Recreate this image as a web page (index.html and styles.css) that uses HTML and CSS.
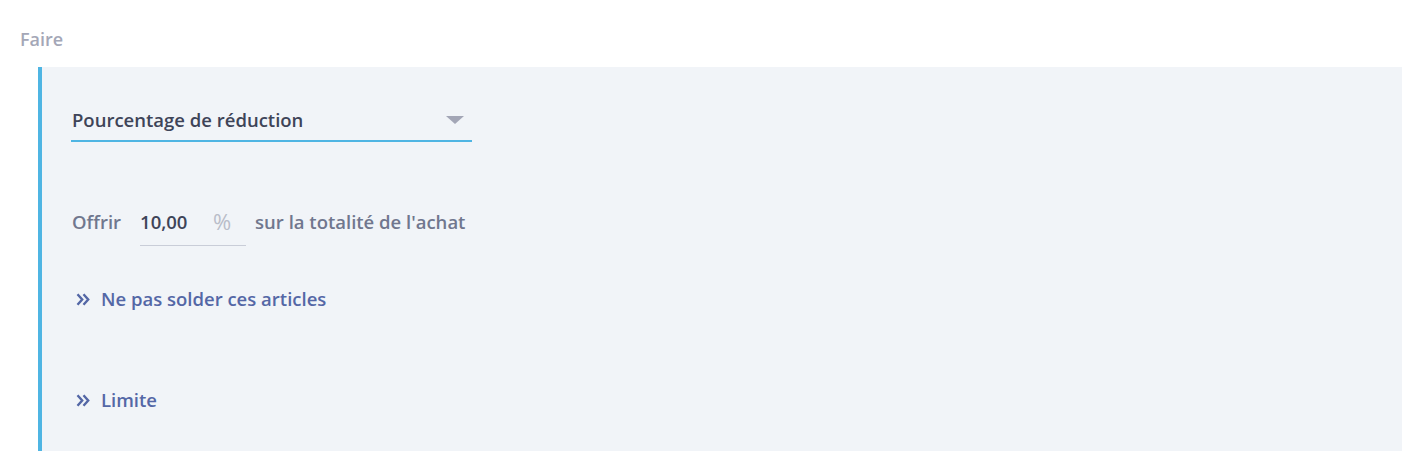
FILE: index.html
```html
<!DOCTYPE html>
<html>
<head>
    <meta charset="utf-8">
    <title>Faire</title>
    <link rel="stylesheet" href="styles.css">
</head>
<body>
    <div class="titre">Faire</div>
    <div class="bloc">
        <div class="liste">
            <span>Pourcentage de réduction</span>
            <span class="fleche"></span>
        </div>

        <div class="ligne">
            <span>Offrir</span>
            <span class="champ">
                <span class="valeur">10,00</span>
                <span class="pct">%</span>
            </span>
            <span>sur la totalité de l'achat</span>
        </div>

        <a class="lien lien1" href="#">
            <svg width="14" height="13" viewBox="0 0 14 13"><path d="M1.5 1.2 L6.2 6.5 L1.5 11.8 M7.5 1.2 L12.2 6.5 L7.5 11.8" fill="none" stroke="currentColor" stroke-width="2.4"/></svg>
            Ne pas solder ces articles
        </a>
        <a class="lien lien2" href="#">
            <svg width="14" height="13" viewBox="0 0 14 13"><path d="M1.5 1.2 L6.2 6.5 L1.5 11.8 M7.5 1.2 L12.2 6.5 L7.5 11.8" fill="none" stroke="currentColor" stroke-width="2.4"/></svg>
            Limite
        </a>
    </div>
</body>
</html>
```

FILE: styles.css
```css
body {
    margin: 0;
    font-family: "Open Sans", "Noto Sans", sans-serif;
    font-weight: 600;
    background: #fff;
}

.titre {
    padding: 27px 0 0 20px;
    margin-bottom: 16px;
    font-size: 18px;
    line-height: 24px;
    color: #a4a7b7;
}

.bloc {
    margin-left: 38px;
    width: 1364px;
    box-sizing: border-box;
    border-left: 4px solid #4fb5e3;
    background: #f1f4f8;
    padding: 36px 0 39px 30px;
}

.liste {
    width: 400px;
    height: 32px;
    padding-bottom: 5px;
    border-bottom: 2px solid #4fb5e3;
    display: flex;
    align-items: center;
    justify-content: space-between;
    font-size: 18.5px;
    color: #3e4458;
    margin-left: -1px;
    padding-left: 1px;
    box-sizing: content-box;
}

.fleche {
    width: 0;
    height: 0;
    border-left: 9px solid transparent;
    border-right: 9px solid transparent;
    border-top: 8px solid #a3a6b6;
    margin-right: 8px;
    margin-top: 2px;
}

.ligne {
    margin-top: 68px;
    display: flex;
    align-items: flex-start;
    font-size: 18.5px;
    line-height: 24px;
    color: #70778e;
}

.champ {
    margin: 0 9px 0 19px;
    width: 106px;
    padding-bottom: 11px;
    border-bottom: 1px solid #c9cdd8;
    display: flex;
    justify-content: space-between;
}

.valeur {
    color: #3e4458;
}

.pct {
    color: #b9bdc9;
    font-size: 22px;
    font-weight: 400;
    line-height: 22px;
    margin-right: 15px;
}

.lien {
    display: flex;
    align-items: center;
    gap: 11px;
    font-size: 18.5px;
    line-height: 24px;
    color: #5467a6;
    text-decoration: none;
    padding-left: 4px;
    width: max-content;
}

.lien1 {
    margin-top: 41px;
}

.lien2 {
    margin-top: 77px;
}
```
